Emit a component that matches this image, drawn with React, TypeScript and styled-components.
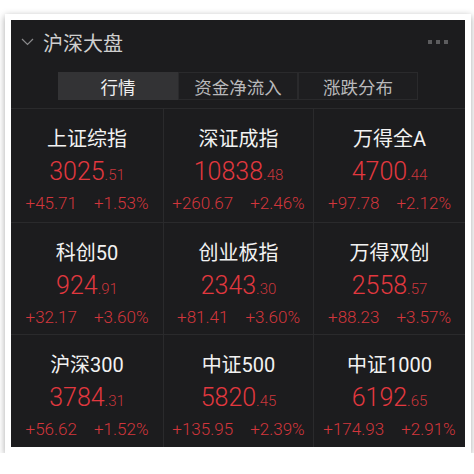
import styled, { createGlobalStyle } from "styled-components";

const GlobalStyle = createGlobalStyle`
  html, body {
    margin: 0;
    padding: 0;
    background: #ffffff;
  }
  body {
    font-family: Roboto, "Noto Sans CJK SC", sans-serif;
  }
`;

const Frame = styled.div`
  margin: 14px 0 0 5px;
  width: 454px;
  padding: 6px;
  background: #ffffff;
  box-shadow: 0 2px 7px rgba(0, 0, 0, 0.35);
`;

const Panel = styled.div`
  width: 454px;
  height: 427px;
  background: #1c1c1e;
  display: flex;
  flex-direction: column;
`;

const Header = styled.div`
  height: 52px;
  display: flex;
  align-items: center;
  padding: 0 17px 8px 10px;
  box-sizing: border-box;
`;

const Title = styled.div`
  margin-left: 9px;
  font-family: "Noto Sans CJK SC", sans-serif;
  font-size: 20px;
  color: #cfcfcf;
  flex: 1;
`;

const Dots = styled.div`
  display: flex;
  gap: 4px;
`;

const Dot = styled.span`
  width: 4px;
  height: 4px;
  background: #5c5c5e;
`;

const Tabs = styled.div`
  display: flex;
  margin: 0 0 8px 47px;
  height: 28px;
`;

const Tab = styled.div<{ $active?: boolean }>`
  width: 120px;
  box-sizing: border-box;
  display: flex;
  align-items: center;
  justify-content: center;
  font-family: "Noto Sans CJK SC", sans-serif;
  font-size: 17.5px;
  color: ${(p) => (p.$active ? "#f0f0f0" : "#b9b9bb")};
  background: ${(p) => (p.$active ? "#333335" : "#1e1e20")};
  border: 1px solid ${(p) => (p.$active ? "#333335" : "#2a2a2c")};
`;

const Grid = styled.div`
  flex: 1;
  display: grid;
  grid-template-columns: 152px 150px 1fr;
  grid-template-rows: 113px 112px 1fr;
  border-top: 1px solid #2a2a2c;
`;

const Cell = styled.div<{ $col: number; $row: number }>`
  display: flex;
  flex-direction: column;
  align-items: center;
  padding-top: 17px;
  box-sizing: border-box;
  border-left: ${(p) => (p.$col > 0 ? "1px solid #2a2a2c" : "none")};
  border-top: ${(p) => (p.$row > 0 ? "1px solid #2a2a2c" : "none")};
  white-space: nowrap;
`;

const Name = styled.div`
  font-family: Roboto, "Noto Sans CJK SC", sans-serif;
  font-size: 20px;
  line-height: 26px;
  color: #f2f2f2;
`;

const Value = styled.div`
  margin-top: 6px;
  font-size: 25px;
  font-weight: 300;
  line-height: 28px;
  color: #e2383f;
`;

const Decimal = styled.span`
  font-size: 15px;
  color: #c9363c;
`;

const Change = styled.div`
  margin-top: 3px;
  display: flex;
  gap: 17px;
  font-size: 17px;
  font-weight: 300;
  line-height: 22px;
  color: #d2363c;
`;

const indices = [
  ["上证综指", "3025", ".51", "+45.71", "+1.53%"],
  ["深证成指", "10838", ".48", "+260.67", "+2.46%"],
  ["万得全A", "4700", ".44", "+97.78", "+2.12%"],
  ["科创50", "924", ".91", "+32.17", "+3.60%"],
  ["创业板指", "2343", ".30", "+81.41", "+3.60%"],
  ["万得双创", "2558", ".57", "+88.23", "+3.57%"],
  ["沪深300", "3784", ".31", "+56.62", "+1.52%"],
  ["中证500", "5820", ".45", "+135.95", "+2.39%"],
  ["中证1000", "6192", ".65", "+174.93", "+2.91%"],
];

const Chevron = () => (
  <svg width="13" height="8" viewBox="0 0 13 8">
    <path d="M1 1 L6.5 6.5 L12 1" fill="none" stroke="#8a8a8c" strokeWidth="1.2" />
  </svg>
);

export default function App() {
  return (
    <>
      <GlobalStyle />
      <Frame>
        <Panel>
          <Header>
            <Chevron />
            <Title>沪深大盘</Title>
            <Dots>
              <Dot />
              <Dot />
              <Dot />
            </Dots>
          </Header>
          <Tabs>
            <Tab $active>行情</Tab>
            <Tab>资金净流入</Tab>
            <Tab>涨跌分布</Tab>
          </Tabs>
          <Grid>
            {indices.map(([name, int, dec, chg, pct], i) => (
              <Cell key={name} $col={i % 3} $row={Math.floor(i / 3)}>
                <Name>{name}</Name>
                <Value>
                  {int}
                  <Decimal>{dec}</Decimal>
                </Value>
                <Change>
                  <span>{chg}</span>
                  <span>{pct}</span>
                </Change>
              </Cell>
            ))}
          </Grid>
        </Panel>
      </Frame>
    </>
  );
}
